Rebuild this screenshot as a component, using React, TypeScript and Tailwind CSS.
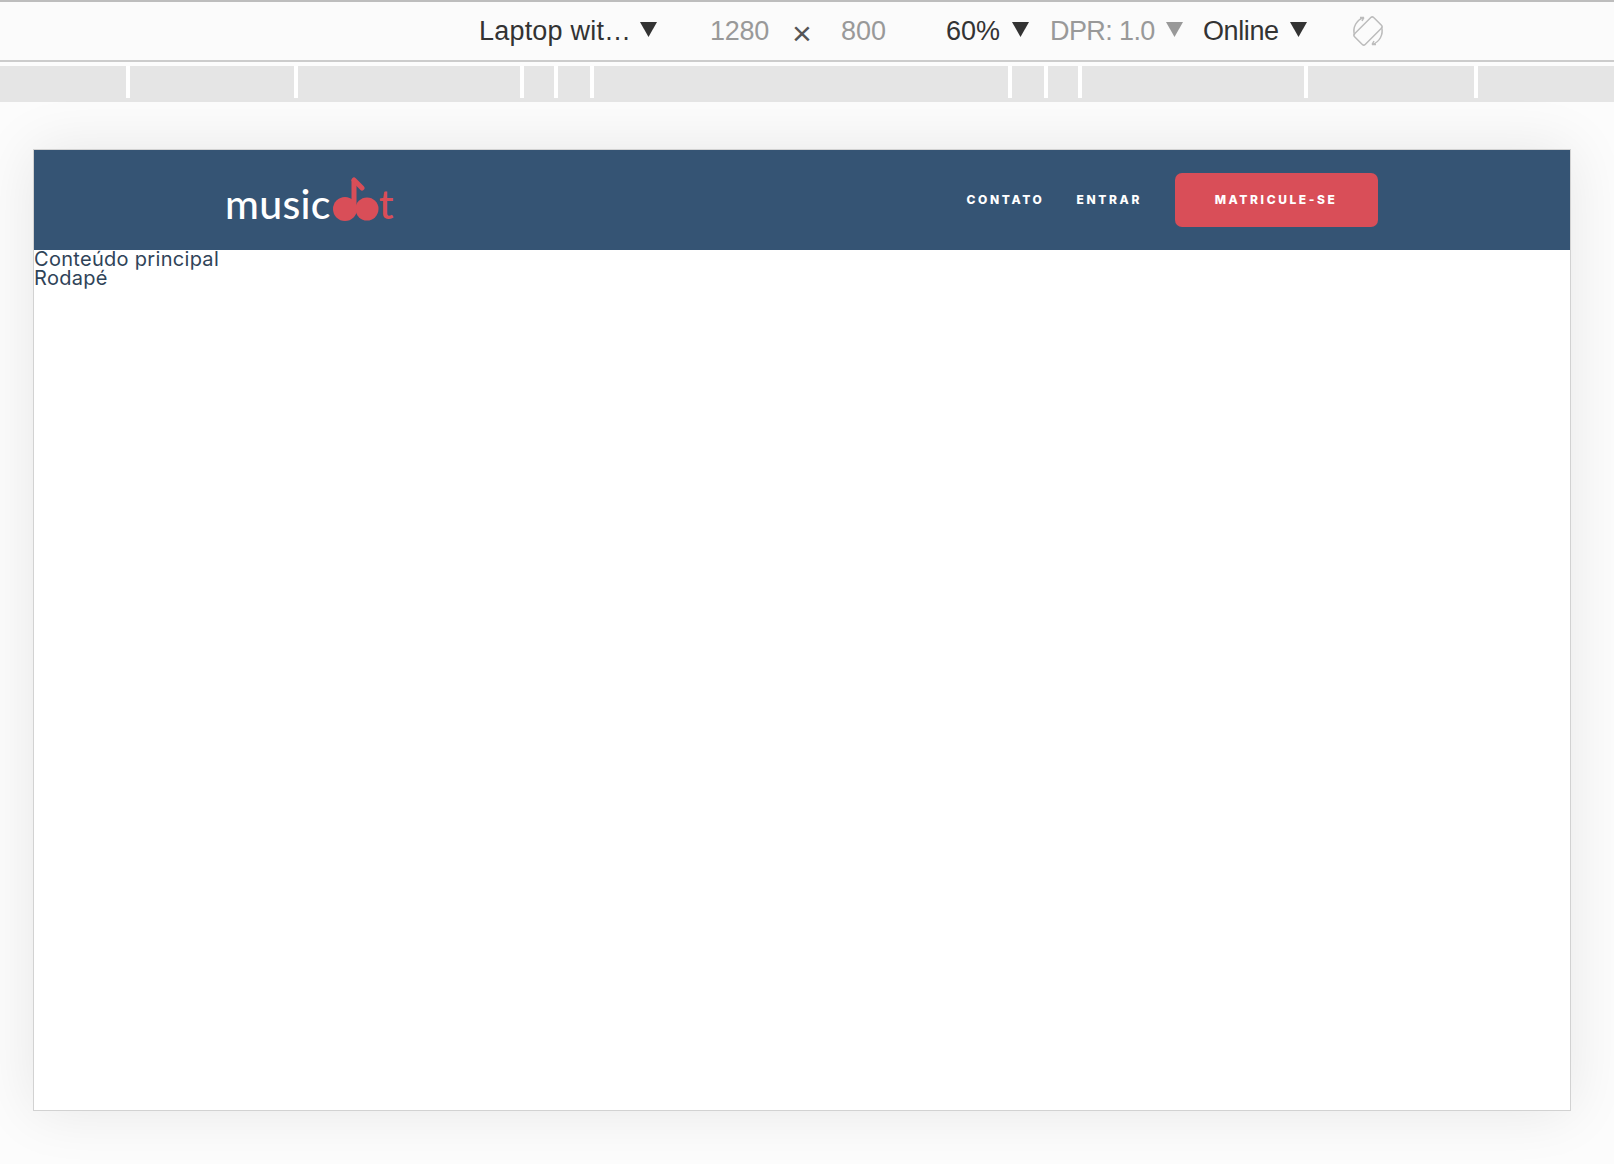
const sans = "font-['Liberation_Sans',Arial,sans-serif]";
const body = "font-['Inter','Open_Sans',sans-serif]";

function Arrow({ muted }: { muted?: boolean }) {
  return (
    <svg width="17" height="15" viewBox="0 0 17 15" className="mt-[-4px]">
      <polygon points="0,0 17,0 8.5,15" fill={muted ? "#999999" : "#333333"} />
    </svg>
  );
}

function RotateIcon() {
  return (
    <svg width="34" height="34" viewBox="0 0 34 34" fill="none" stroke="#bcbcbc" strokeWidth="1.5">
      <rect x="9.5" y="3.5" width="15" height="27" rx="2" transform="rotate(45 17 17)" />
      <path d="M3.5 21 A14 14 0 0 1 13 3.5 M13 3.5 L9 3.5 M13 3.5 L11 7" />
      <path d="M30.5 13 A14 14 0 0 1 21 30.5 M21 30.5 L25 30.5 M21 30.5 L23 27" />
    </svg>
  );
}

function Logo() {
  return (
    <div className="flex items-end h-[46px] text-[41px] leading-[38px] font-['Lato','Open_Sans',sans-serif] font-medium">
      <span className="text-white tracking-[0.3px]">music</span>
      <svg width="46" height="46" viewBox="0 0 46 46" className="shrink-0 ml-[2px] mt-[-2px]">
        <circle cx="12" cy="32" r="12" fill="#d94e58" />
        <circle cx="34" cy="32" r="11.5" fill="#d94e58" />
        <rect x="18.5" y="3" width="5" height="29" fill="#d94e58" />
        <path d="M21 3 L29 11" stroke="#d94e58" strokeWidth="5" strokeLinecap="round" />
      </svg>
      <span className="text-[#d94e58]">t</span>
    </div>
  );
}

export default function App() {
  return (
    <div className={`relative w-[1614px] h-[1164px] overflow-hidden bg-[#fcfcfc] ${sans}`}>
      <div className="h-[62px] bg-[#fbfbfb] border-t-2 border-b-2 border-t-[#bdbdbd] border-b-[#cccccc] flex items-center pl-[479px] text-[27px] text-[#333333]">
        <span className="w-[161px] tracking-[0.2px]">Laptop wit…</span>
        <Arrow />
        <span className="ml-[53px] w-[82px] text-[#999999] tracking-[-0.3px]">1280</span>
        <span className="w-[49px] text-[#555555] text-[34px] leading-none mt-[4px]">×</span>
        <span className="w-[105px] text-[#999999]">800</span>
        <span className="w-[66px]">60%</span>
        <Arrow />
        <span className="ml-[21px] w-[116px] text-[#999999] tracking-[-0.6px]">DPR: 1.0</span>
        <Arrow muted />
        <span className="ml-[20px] w-[87px] tracking-[-0.4px]">Online</span>
        <Arrow />
        <div className="ml-[44px]">
          <RotateIcon />
        </div>
      </div>

      <div className="mt-[4px] h-[36px] bg-[#e5e5e5] flex items-start">
        <div className="ml-[126px] w-[4px] h-[32px] bg-white" />
        <div className="ml-[164px] w-[4px] h-[32px] bg-white" />
        <div className="ml-[222px] w-[4px] h-[32px] bg-white" />
        <div className="ml-[30px] w-[4px] h-[32px] bg-white" />
        <div className="ml-[32px] w-[4px] h-[32px] bg-white" />
        <div className="ml-[414px] w-[4px] h-[32px] bg-white" />
        <div className="ml-[32px] w-[4px] h-[32px] bg-white" />
        <div className="ml-[30px] w-[4px] h-[32px] bg-white" />
        <div className="ml-[222px] w-[4px] h-[32px] bg-white" />
        <div className="ml-[166px] w-[4px] h-[32px] bg-white" />
      </div>

      <div className={`ml-[33px] mt-[47px] w-[1538px] h-[962px] bg-white border border-[#d2d2d2] shadow-[0_0_56px_rgba(0,0,0,0.09)] ${body}`}>
        <header className="h-[100px] bg-[#355474] flex items-center pl-[191px]">
          <Logo />
          <nav className="flex items-center ml-[573px] text-[12px] font-extrabold text-white tracking-[2.6px]">
            <a className="w-[110px]">CONTATO</a>
            <a className="w-[98px]">ENTRAR</a>
            <a className="w-[203px] h-[54px] rounded-[7px] bg-[#d94e58] flex items-center justify-center mt-[-1px]">MATRICULE-SE</a>
          </nav>
        </header>
        <main className="text-[20px] leading-[19px] tracking-[0.3px] text-[#2f4358]">Conteúdo principal</main>
        <footer className="text-[20px] leading-[19px] tracking-[0.3px] text-[#2f4358]">Rodapé</footer>
      </div>
    </div>
  );
}
